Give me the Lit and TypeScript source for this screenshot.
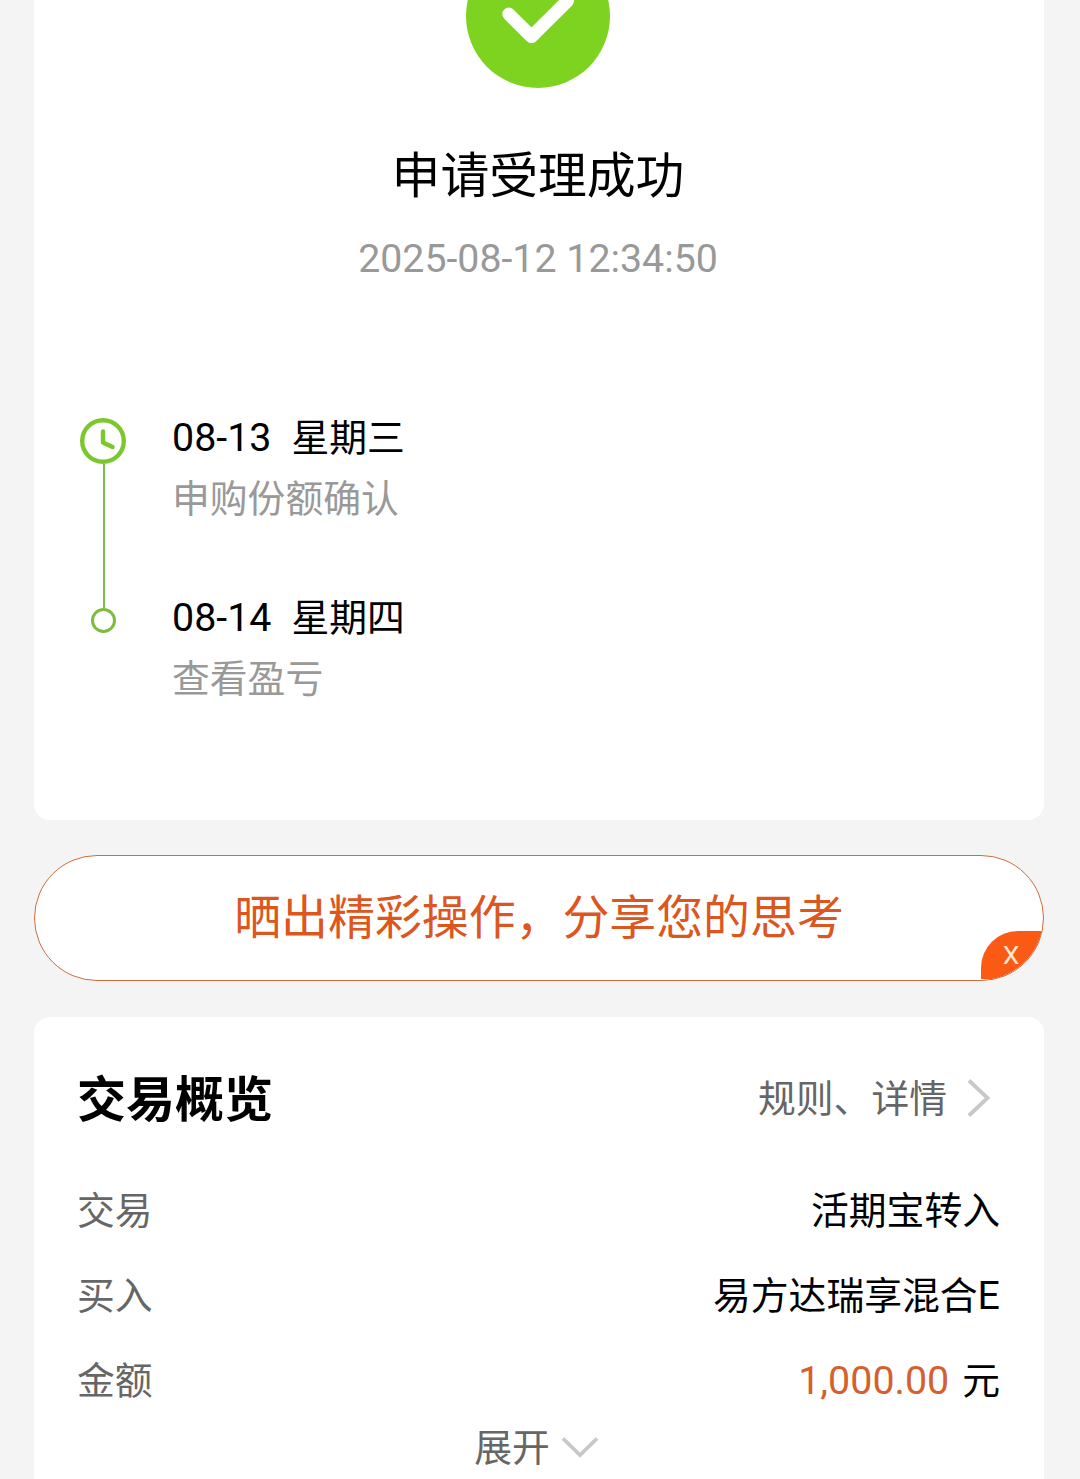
import { LitElement, html, css } from "lit";
import { customElement } from "lit/decorators.js";

interface Step { date: string; day: string; note: string; }

const STEPS: Step[] = [
  { date: "08-13", day: "星期三", note: "申购份额确认" },
  { date: "08-14", day: "星期四", note: "查看盈亏" },
];

@customElement("app-root")
export class AppRoot extends LitElement {
  static styles = css`
    :host {
      display: block;
      height: 1479px;
      overflow: hidden;
      background: #f4f4f4;
      color: #000;
      font-family: Roboto, "Noto Sans CJK SC", sans-serif;
      font-size: 37.8px;
    }
    * { box-sizing: border-box; }
    svg { display: block; flex: none; }
    .page { display: flex; flex-direction: column; padding: 0 36px 0 34px; }
    .card { background: #fff; }
    .result { height: 820px; border-radius: 0 0 16px 16px; display: flex; flex-direction: column; }
    .status { display: flex; flex-direction: column; align-items: center; padding-right: 2px; }
    .title { font-size: 48.8px; line-height: 70px; margin-top: 54px; }
    .time { font-size: 39.3px; line-height: 50px; margin-top: 22px; color: #999; }
    .timeline { display: flex; padding: 129px 0 0 46px; }
    .rail { width: 46px; margin-top: 5px; display: flex; flex-direction: column; align-items: center; }
    .line { width: 2px; height: 144px; background: #7fbb4b; margin-left: 1px; }
    .steps { margin-left: 46px; }
    .step { height: 180px; }
    .day { display: flex; align-items: baseline; gap: 20px; line-height: 50px; }
    .num { font-size: 39.4px; }
    .note { line-height: 60px; margin-top: 6px; color: #999; }
    .share {
      position: relative;
      height: 126px;
      margin-top: 35px;
      border: 1.5px solid #cf6c3e;
      border-radius: 63px;
      overflow: hidden;
      background: #fff;
      color: #dc5620;
      font-size: 46.9px;
      line-height: 124px;
      text-align: center;
    }
    .close {
      position: absolute;
      right: 0;
      bottom: 1px;
      width: 62px;
      height: 48px;
      padding-right: 2px;
      border-radius: 37px 0 0 0;
      background: #fa5a14;
      color: #ffe9d2;
      font-size: 26.5px;
      line-height: 48px;
      text-align: center;
    }
    .overview { height: 480px; margin-top: 36px; border-radius: 16px 16px 0 0; padding: 0 44px; }
    .head { display: flex; justify-content: space-between; align-items: center; height: 150px; padding-top: 12px; }
    .heading { font-size: 49px; font-weight: 700; padding-bottom: 5px; margin-left: -1px; }
    .more { display: flex; align-items: center; gap: 20px; color: #666; padding-right: 9px; }
    .more span, .expand span { padding-bottom: 6px; }
    .row { display: flex; justify-content: space-between; align-items: baseline; height: 85px; line-height: 88px; }
    .label { color: #666; margin-left: -1px; }
    .latin { font-size: 39.4px; }
    .amount { color: #d4602e; font-size: 39.4px; margin-right: 13px; }
    .expand { display: flex; justify-content: center; align-items: center; gap: 11px; height: 50px; color: #666; padding-right: 5px; }
  `;

  render() {
    return html`
      <main class="page">
        <section class="card result">
          <div class="status">
            <svg width="144" height="88" viewBox="466 0 144 88">
              <circle cx="538" cy="16" r="72" fill="#7ed321" />
              <path d="M508.8 14 531.5 36.7 567.5 .8" fill="none" stroke="#fff" stroke-width="13" stroke-linecap="round" stroke-linejoin="round" />
            </svg>
            <div class="title">申请受理成功</div>
            <div class="time">2025-08-12 12:34:50</div>
          </div>
          <div class="timeline">
            <div class="rail">
              <svg width="46" height="46" viewBox="0 0 46 46" fill="none" stroke="#7cc62e" stroke-width="4.4">
                <circle cx="23" cy="23" r="20.8" />
                <path d="M23 13.5v11L32.5 29" stroke-linecap="round" stroke-linejoin="round" />
              </svg>
              <div class="line"></div>
              <svg width="26" height="26" viewBox="0 0 26 26">
                <circle cx="13.5" cy="12.5" r="11" fill="none" stroke="#7cbd3c" stroke-width="3" />
              </svg>
            </div>
            <div class="steps">
              ${STEPS.map((s) => html`
                <div class="step">
                  <div class="day"><span class="num">${s.date}</span><span>${s.day}</span></div>
                  <div class="note">${s.note}</div>
                </div>`)}
            </div>
          </div>
        </section>

        <section class="share">
          晒出精彩操作，分享您的思考
          <span class="close">X</span>
        </section>

        <section class="card overview">
          <div class="head">
            <span class="heading">交易概览</span>
            <div class="more"><span>规则、详情</span>
              <svg width="24" height="40" viewBox="0 0 24 40" fill="none" stroke="#c8c8c8" stroke-width="3.8">
                <path d="M2 2.5 20.5 20 2 37.5" />
              </svg>
            </div>
          </div>
          <div class="row"><span class="label">交易</span><span>活期宝转入</span></div>
          <div class="row"><span class="label">买入</span><span>易方达瑞享混合<span class="latin">E</span></span></div>
          <div class="row"><span class="label">金额</span><span><span class="amount">1,000.00</span>元</span></div>
          <div class="expand"><span>展开</span>
            <svg width="38" height="22" viewBox="0 0 38 22" fill="none" stroke="#c8c8c8" stroke-width="3.8">
              <path d="M2 2.5 19 19 36 2.5" />
            </svg>
          </div>
        </section>
      </main>
    `;
  }
}
